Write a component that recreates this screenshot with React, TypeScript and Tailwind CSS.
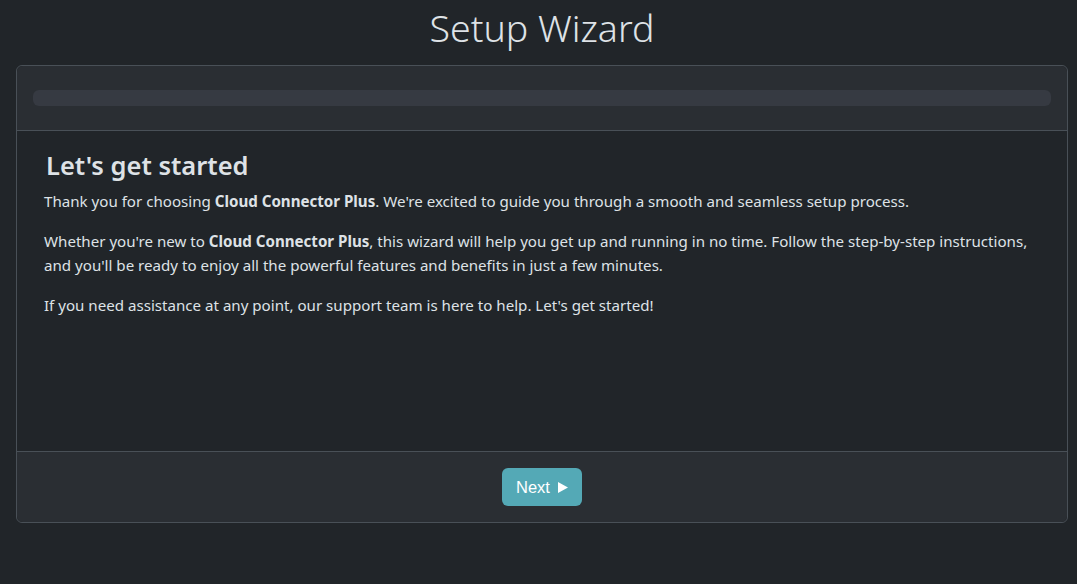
export default function App() {
  return (
    <div className="min-h-[584px] bg-[#212529] text-[#dee2e6] font-['Noto_Sans',sans-serif]">
      <div className="ml-[16px] w-[1052px]">
        <h1 className="pt-[5px] text-center text-[37.5px] leading-[46px] font-light">Setup Wizard</h1>
        <div className="mt-[14px] flex flex-col rounded-[6px] border border-[#495057]">
          {/* Header with progress */}
          <div className="rounded-t-[6px] bg-[#2a2e33] px-[16px] py-[24px] border-b border-[#495057]">
            <div className="h-[16px] w-full rounded-[6px] bg-[#363a42]"></div>
          </div>

          {/* Body */}
          <div className="h-[320px] px-[27px] pt-[18px]">
            <h2 className="mb-[8px] ml-[2px] text-[25.5px] leading-[32px] font-semibold">Let's get started</h2>
            <p className="mb-[16px] text-[15.12px] leading-[24px]">
              Thank you for choosing <b>Cloud Connector Plus</b>. We're excited to guide you through a smooth and seamless setup process.
            </p>
            <p className="mb-[16px] text-[15.12px] leading-[24px]">
              Whether you're new to <b>Cloud Connector Plus</b>, this wizard will help you get up and running in no time. Follow the step-by-step instructions, and you'll be ready to enjoy all the powerful features and benefits in just a few minutes.
            </p>
            <p className="text-[15.12px] leading-[24px]">
              If you need assistance at any point, our support team is here to help. Let's get started!
            </p>
          </div>

          {/* Footer */}
          <div className="flex justify-center rounded-b-[6px] border-t border-[#495057] bg-[#2a2e33] py-[16px]">
            <button className="flex h-[38px] items-center gap-[8px] rounded-[6px] bg-[#54a9b6] pl-[14px] pr-[14px] font-['Liberation_Sans',sans-serif] text-[16.5px] text-white">
              Next
              <svg width="10" height="11" viewBox="0 0 10 11" fill="currentColor">
                <path d="M0 0 L10 5.5 L0 11 Z" />
              </svg>
            </button>
          </div>
        </div>
      </div>
    </div>
  );
}
